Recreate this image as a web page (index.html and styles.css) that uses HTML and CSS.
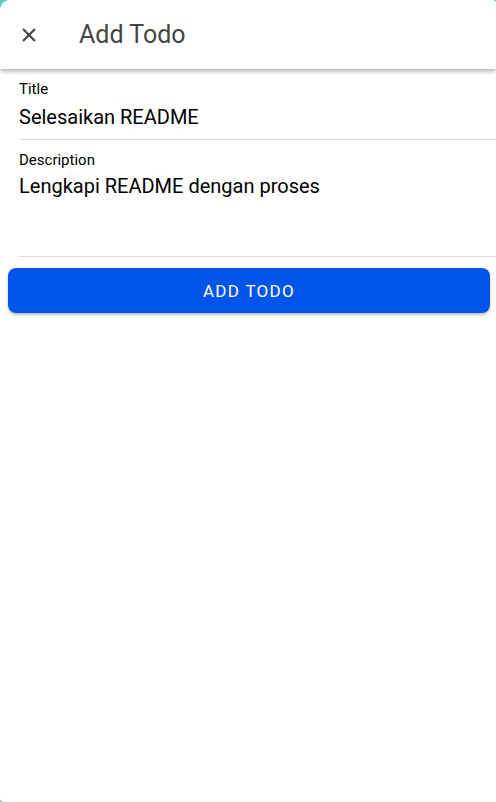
FILE: index.html
```html
<!DOCTYPE html>
<html>
<head>
<meta charset="utf-8">
<link rel="stylesheet" href="styles.css">
</head>
<body>
<div class="card">
  <header class="toolbar">
    <button class="close" aria-label="Close">
      <svg width="16" height="16" viewBox="0 0 16 16"><path d="M2 2 L14 14 M14 2 L2 14" stroke="#444" stroke-width="2.2" stroke-linecap="butt"/></svg>
    </button>
    <h1 class="title">Add Todo</h1>
  </header>
  <main class="form">
    <div class="field">
      <label class="label">Title</label>
      <div class="value">Selesaikan README</div>
    </div>
    <div class="field field-area">
      <label class="label">Description</label>
      <div class="value">Lengkapi README dengan proses</div>
    </div>
    <button class="submit">ADD TODO</button>
  </main>
</div>
</body>
</html>
```
FILE: styles.css
```css
html, body {
  margin: 0;
  padding: 0;
  height: 100%;
}
body {
  background: #4fd1c5;
  font-family: Roboto, "Liberation Sans", sans-serif;
  overflow: hidden;
}
.card {
  background: #fff;
  height: 802px;
  border-radius: 10px 4px 0 4px;
  overflow: hidden;
}
.toolbar {
  height: 69px;
  display: flex;
  align-items: center;
  background: #fff;
  box-shadow: 0 2px 5px rgba(0,0,0,0.35);
  position: relative;
  z-index: 1;
}
.close {
  border: 0;
  background: none;
  padding: 0;
  margin-left: 21px;
  width: 16px;
  height: 16px;
  display: flex;
}
.title {
  margin: 0 0 0 42px;
  font-size: 25px;
  font-weight: 400;
  color: #444;
}
.form {
  display: flex;
  flex-direction: column;
}
.field {
  margin-left: 19px;
  border-bottom: 1px solid #dcdcdc;
  padding: 11px 0 10px;
}
.field-area {
  height: 117px;
  box-sizing: border-box;
  padding-top: 11px;
}
.label {
  display: block;
  font-size: 15px;
  color: #000;
  line-height: 18px;
}
.value {
  font-size: 20px;
  color: #000;
  line-height: 24px;
  margin-top: 7px;
}
.field-area .value {
  margin-top: 5px;
}
.submit {
  margin: 11px 6px 0 8px;
  height: 45px;
  border: 0;
  border-radius: 8px;
  background: #0055e8;
  color: #fff;
  font-family: Roboto, "Liberation Sans", sans-serif;
  font-size: 17px;
  font-weight: 400;
  letter-spacing: 1.3px;
  box-shadow: 0 2px 3px rgba(0,0,0,0.25);
}
```
